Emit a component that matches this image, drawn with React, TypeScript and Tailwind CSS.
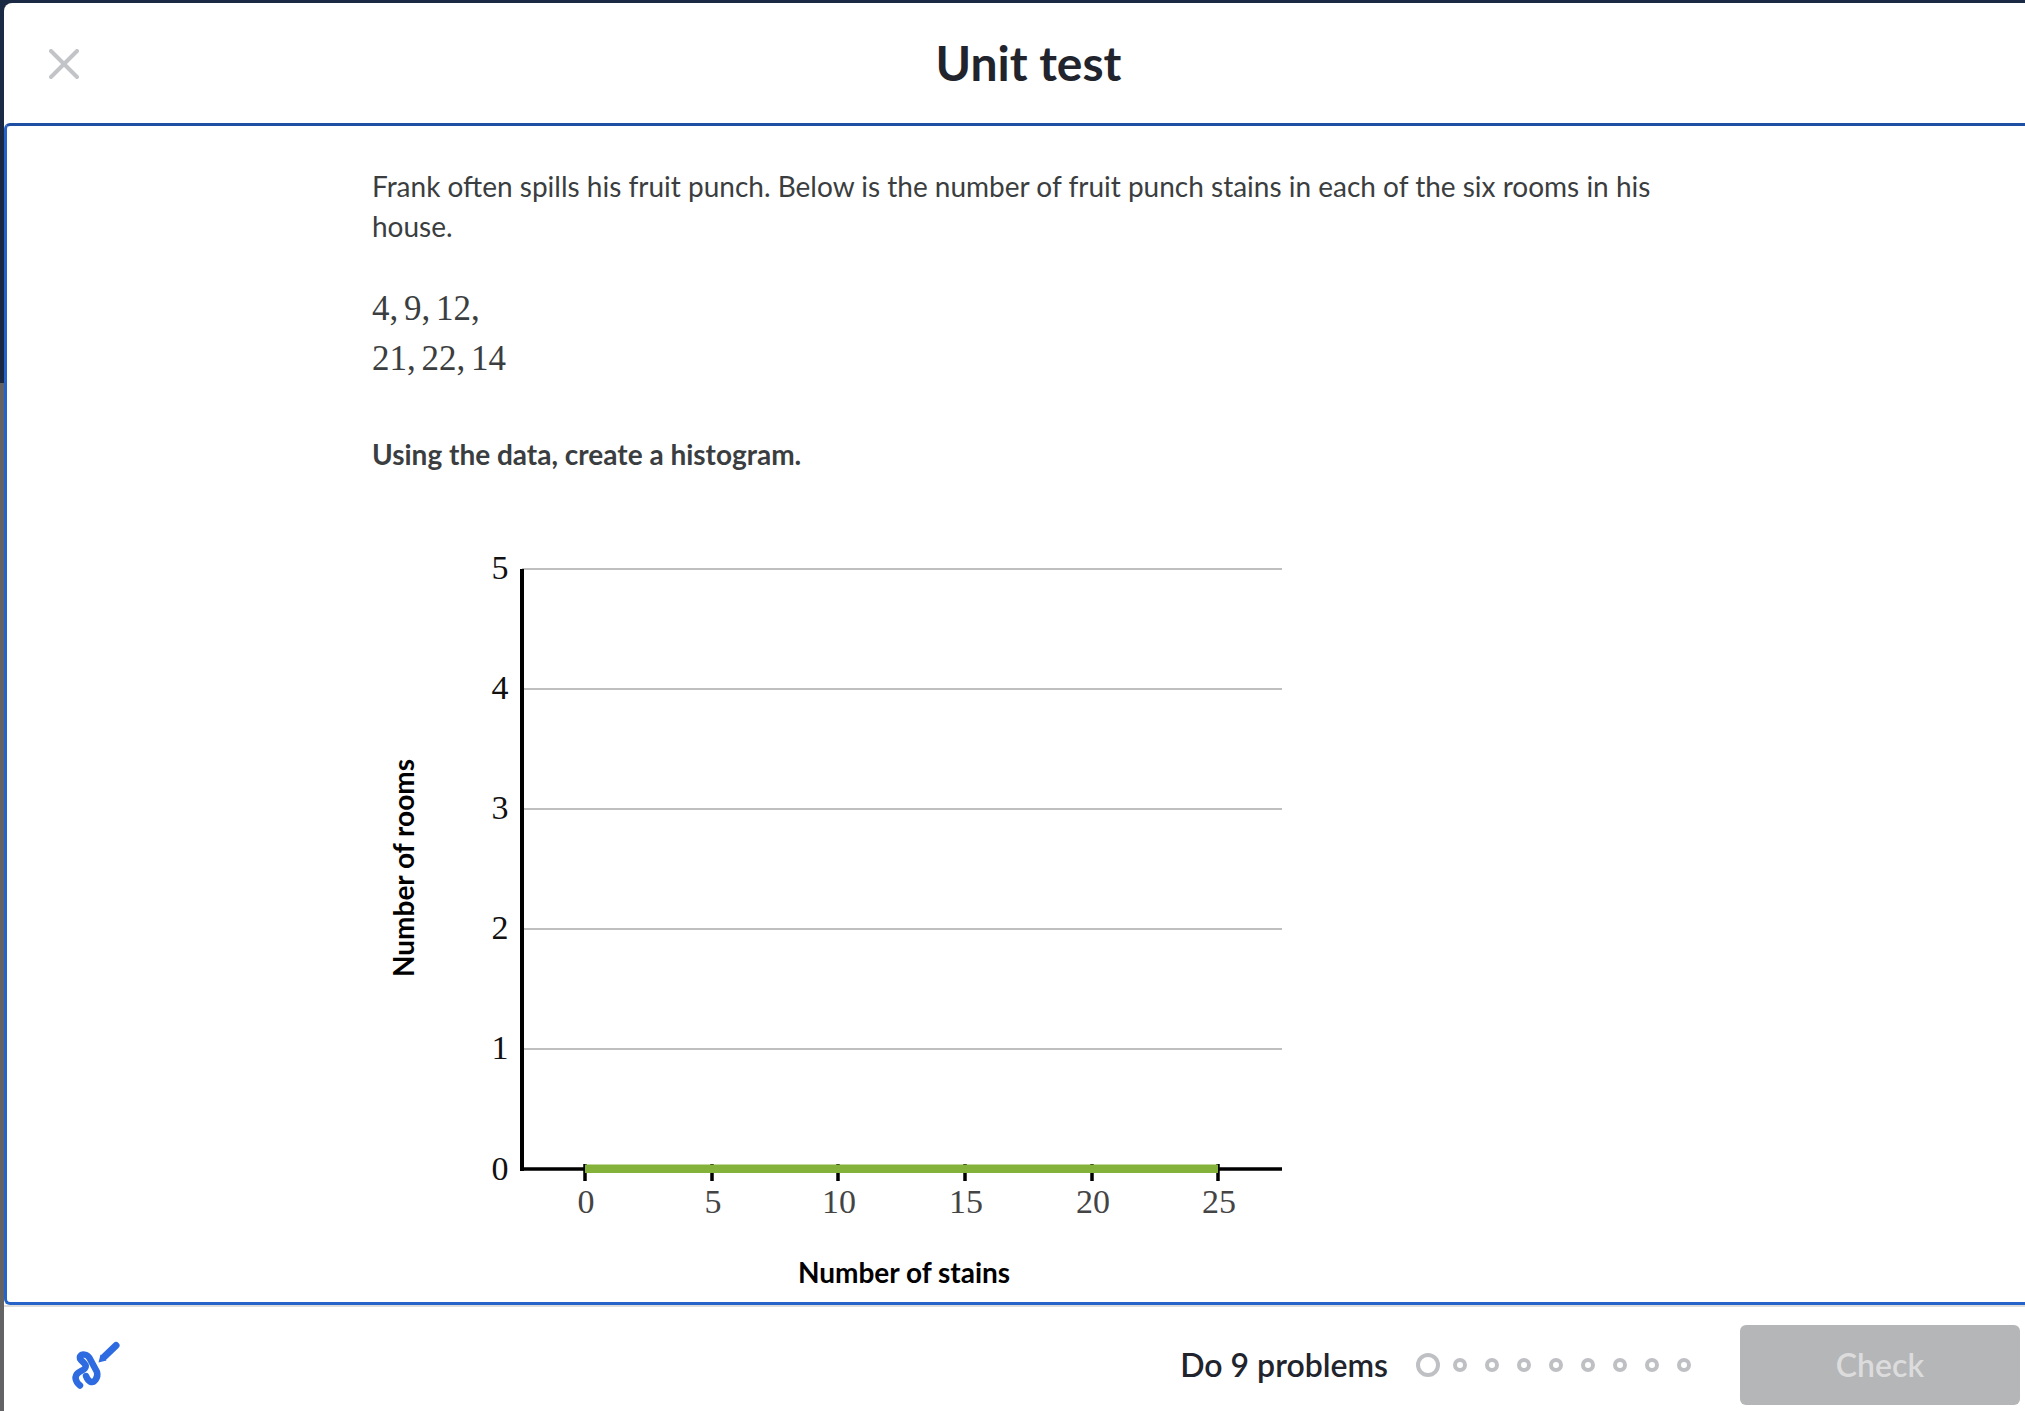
const lato = "font-['Lato','Noto_Sans',sans-serif]";
const yTicks = [5, 4, 3, 2, 1];
const xTicks = [0, 5, 10, 15, 20, 25];

const CloseIcon = () => (
  <svg width="30" height="30" viewBox="0 0 30 30" className="block">
    <path d="M2 2 L28 28 M28 2 L2 28" stroke="#c3c4c8" strokeWidth="4" strokeLinecap="round" />
  </svg>
);

const ScribbleIcon = () => (
  <svg width="60" height="60" viewBox="0 0 60 60" className="block">
    <path
      d="M14 49.5 C8.5 45 8.5 40 12 37 C15 34.5 21 33 19.5 29 C18 25.5 12.5 24 14 20.5 C16 17.5 21 18 23.5 22 L31 36 C32.5 42 28 47.5 24 45.5 C22 44.5 21 42.5 20 40"
      fill="none"
      stroke="#2e6be0"
      strokeWidth="6.5"
      strokeLinecap="round"
      strokeLinejoin="round"
    />
    <path d="M38 21 L50 9.5" stroke="#2e6be0" strokeWidth="7" strokeLinecap="round" />
    <path d="M32.5 26.5 L34.5 18.5 L40.5 24.5 Z" fill="#2e6be0" />
  </svg>
);

const Histogram = () => {
  const gridY = [569, 689, 809, 929, 1049];
  const tickX = [585, 712, 838, 965, 1092, 1218];
  return (
    <svg width="960" height="760" viewBox="372 540 960 760" className="block">
      {gridY.map((y) => (
        <line key={y} x1="522" x2="1282" y1={y} y2={y} stroke="#aaaaaa" strokeWidth="1.5" />
      ))}
      {yTicks.map((t, i) => (
        <text key={t} x="500" y={gridY[i] + 10} textAnchor="middle" fontSize="34" fontFamily="Liberation Serif" fill="#111">
          {t}
        </text>
      ))}
      <text x="500" y="1180" textAnchor="middle" fontSize="34" fontFamily="Liberation Serif" fill="#111">
        0
      </text>
      <line x1="522" x2="522" y1="569" y2="1171" stroke="#000" strokeWidth="4" />
      <line x1="520" x2="1282" y1="1169" y2="1169" stroke="#000" strokeWidth="3.5" />
      {tickX.map((x) => (
        <line key={x} x1={x} x2={x} y1="1164" y2="1181" stroke="#000" strokeWidth="3.5" />
      ))}
      <rect x="585" y="1164.5" width="633" height="8.5" fill="#83b13a" />
      {xTicks.map((t, i) => (
        <text key={t} x={tickX[i] + 1} y="1213" textAnchor="middle" fontSize="34" fontFamily="Liberation Serif" fill="#444">
          {t}
        </text>
      ))}
      <text x="904" y="1283" textAnchor="middle" fontSize="28" fontWeight="700" fontFamily="Lato" fill="#000">
        Number of stains
      </text>
      <text
        transform="translate(414 868) rotate(-90)"
        textAnchor="middle"
        fontSize="28"
        fontWeight="700"
        fontFamily="Lato"
        fill="#000"
      >
        Number of rooms
      </text>
    </svg>
  );
};

export default function App() {
  return (
    <div className={`h-[1411px] w-[2025px] overflow-hidden bg-[#636366] ${lato}`}>
      <div className="flex h-full flex-col pt-[3px] pl-1 bg-[linear-gradient(to_bottom,#1b2a44_383px,#636366_383px)]">
        <div className="flex h-full flex-col rounded-tl-lg bg-white">
          <header className="relative flex h-[120px] shrink-0 items-center justify-center pl-[28px]">
            <button className="absolute left-[45px] top-[46px]">
              <CloseIcon />
            </button>
            <h1 className="text-[48px] font-bold leading-none text-[#21242c]">Unit test</h1>
          </header>

          <main className="h-[1182px] shrink-0 rounded-l-md border-y-[3px] border-l-[3px] border-t-[#1f4fa3] border-b-[#2563c9] border-l-[#2563c9] pl-[365px] pt-[40px]">
            <p className="w-[1300px] text-[28px] leading-[40px] text-[#3b3e40]">
              Frank often spills his fruit punch. Below is the number of fruit punch stains in each of the six rooms in
              his house.
            </p>
            <div className="mt-[38px] font-['Liberation_Serif',serif] text-[35px] leading-[50px] [word-spacing:-3px] text-[#3b3e40]">
              <div>4, 9, 12,</div>
              <div>21, 22, 14</div>
            </div>
            <p className="mt-[50px] text-[28px] font-bold leading-[40px] text-[#3b3e40]">Using the data, create a histogram.</p>
            <div className="mt-[66px]">
              <Histogram />
            </div>
          </main>

          <footer className="flex min-h-0 flex-1 items-start border-t-2 border-t-[#dddddd] pl-[62px] pr-[5px] pt-[18px]">
            <div className="mt-[11px]">
              <ScribbleIcon />
            </div>
            <div className="ml-auto flex h-[80px] items-center">
              <span className="text-[32px] font-semibold text-[#21242c]">Do 9 problems</span>
              <div className="ml-[28px] flex items-center gap-[18px]">
                <span className="mr-[-5px] h-[24px] w-[24px] rounded-full border-[4px] border-[#bfc0c4]" />
                {[...Array(8)].map((_, i) => (
                  <span key={i} className="h-[14px] w-[14px] rounded-full border-[4px] border-[#bfc0c4]" />
                ))}
              </div>
              <button className="ml-[49px] h-[80px] w-[280px] rounded-md bg-[#b5b6b8] text-[32px] font-semibold text-[#dcdcdd]">
                Check
              </button>
            </div>
          </footer>
        </div>
      </div>
    </div>
  );
}
